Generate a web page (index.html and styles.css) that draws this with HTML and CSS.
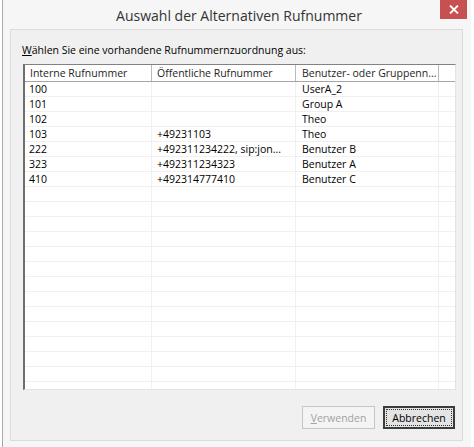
FILE: index.html
```html
<!DOCTYPE html>
<html lang="de">
<head>
<meta charset="utf-8">
<link rel="stylesheet" href="styles.css">
<title>Auswahl der Alternativen Rufnummer</title>
</head>
<body>
<div class="window">
  <div class="titlebar">
    <span class="title">Auswahl der Alternativen Rufnummer</span>
    <button class="close" aria-label="Schließen">
      <svg width="10" height="9" viewBox="0 0 10 9"><path d="M1 0.5 L9 8.5 M9 0.5 L1 8.5" stroke="#fff" stroke-width="1.8"/></svg>
    </button>
  </div>
  <div class="client">
    <div class="label"><u>W</u>ählen Sie eine vorhandene Rufnummernzuordnung aus:</div>
    <div class="list">
      <div class="row head">
        <div class="cell c1">Interne Rufnummer</div>
        <div class="cell c2">Öffentliche Rufnummer</div>
        <div class="cell c3">Benutzer- oder Gruppenn...</div>
        <div class="cell c4"></div>
      </div>
      <div class="row"><div class="cell c1">100</div><div class="cell c2"></div><div class="cell c3">UserA_2</div><div class="cell c4"></div></div>
      <div class="row"><div class="cell c1">101</div><div class="cell c2"></div><div class="cell c3">Group A</div><div class="cell c4"></div></div>
      <div class="row"><div class="cell c1">102</div><div class="cell c2"></div><div class="cell c3">Theo</div><div class="cell c4"></div></div>
      <div class="row"><div class="cell c1">103</div><div class="cell c2">+49231103</div><div class="cell c3">Theo</div><div class="cell c4"></div></div>
      <div class="row"><div class="cell c1">222</div><div class="cell c2">+492311234222, sip:jon...</div><div class="cell c3">Benutzer B</div><div class="cell c4"></div></div>
      <div class="row"><div class="cell c1">323</div><div class="cell c2">+492311234323</div><div class="cell c3">Benutzer A</div><div class="cell c4"></div></div>
      <div class="row"><div class="cell c1">410</div><div class="cell c2">+492314777410</div><div class="cell c3">Benutzer C</div><div class="cell c4"></div></div>
      <div class="filler"></div>
    </div>
    <div class="buttons">
      <button class="btn disabled" disabled><u>V</u>erwenden</button>
      <button class="btn default"><span class="focus">Abbrechen</span></button>
    </div>
  </div>
</div>
</body>
</html>
```
FILE: styles.css
```css
html, body {
  margin: 0;
  padding: 0;
  background: #ffffff;
}
body {
  width: 474px;
  height: 447px;
  overflow: hidden;
  font-family: "Open Sans", "Liberation Sans", sans-serif;
  font-size: 10.5px;
  color: #000;
}
.window {
  margin-left: 2px;
  width: 468px;
  height: 447px;
  border-left: 1px solid #a9a9a9;
  background: #f6f6f6;
  display: flex;
  flex-direction: column;
}
.titlebar {
  position: relative;
  height: 29px;
  display: flex;
  align-items: center;
  justify-content: center;
  padding-left: 4px;
}
.title {
  font-family: "Open Sans", "Liberation Sans", sans-serif;
  font-size: 14px;
  color: #333;
  margin-top: 1px;
}
.close {
  position: absolute;
  top: 0;
  right: 4px;
  width: 27px;
  height: 19px;
  border: none;
  padding: 0;
  background: #c75050;
  display: flex;
  align-items: center;
  justify-content: center;
}
.client {
  margin: 0 8px 0 7px;
  height: 410px;
  border: 1px solid #dcdcdc;
  background: #f0f0f0;
  display: flex;
  flex-direction: column;
  padding: 0 6px 0 11px;
}
.label {
  margin-top: 10px;
  height: 20px;
  line-height: 20px;
  color: #000;
}
.list {
  margin-top: 4px;
  margin-left: 1px;
  height: 324px;
  background: #fff;
  border-top: 1px solid #828282;
  border-left: 2px solid #6e6e6e;
  border-right: 1px solid #e3e3e3;
  border-bottom: 1px solid #e3e3e3;
  display: flex;
  flex-direction: column;
  overflow: hidden;
}
.row {
  display: flex;
  height: 14px;
  border-bottom: 1px solid #f0f0f0;
  flex: none;
}
.cell {
  line-height: 14px;
  white-space: nowrap;
  overflow: hidden;
  padding-left: 4px;
  border-right: 1px solid #f0f0f0;
  box-sizing: border-box;
}
.c1 { width: 127px; }
.c2 { width: 144px; padding-left: 5px; }
.c3 { width: 143px; padding-left: 6px; }
.c4 { flex: 1; border-right: none; }
.row.head {
  height: 16px;
  border-bottom: 1px solid #a5a5a5;
}
.row.head .cell {
  line-height: 16px;
  border-right: 1px solid #b9b9b9;
  color: #1e1e1e;
}
.row.head .c1 { padding-left: 5px; }
.row.head .c4 { border-right: none; }
.filler {
  flex: 1;
  background:
    linear-gradient(to right, transparent 126px, #f0f0f0 126px, #f0f0f0 127px, transparent 127px, transparent 270px, #f0f0f0 270px, #f0f0f0 271px, transparent 271px, transparent 413px, #f0f0f0 413px, #f0f0f0 414px, transparent 414px),
    repeating-linear-gradient(to bottom, transparent 0, transparent 14px, #f0f0f0 14px, #f0f0f0 15px);
}
.buttons {
  display: flex;
  justify-content: flex-end;
  gap: 8px;
  margin-top: 16px;
  margin-right: 1px;
}
.btn {
  font-family: "Open Sans", "Liberation Sans", sans-serif;
  font-size: 10.5px;
  height: 23px;
  padding: 0;
  box-sizing: border-box;
}
.btn.disabled {
  width: 73px;
  border: 1px solid #c4c6c8;
  background: #f4f4f4;
  color: #a2a2a2;
}
.btn.default {
  width: 72px;
  border: 2px solid #3c3c3c;
  background: #e4e4e4;
  color: #000;
  padding: 1px;
  display: flex;
}
.focus {
  flex: 1;
  border: 1px dotted #333;
  display: flex;
  align-items: center;
  justify-content: center;
}
```
